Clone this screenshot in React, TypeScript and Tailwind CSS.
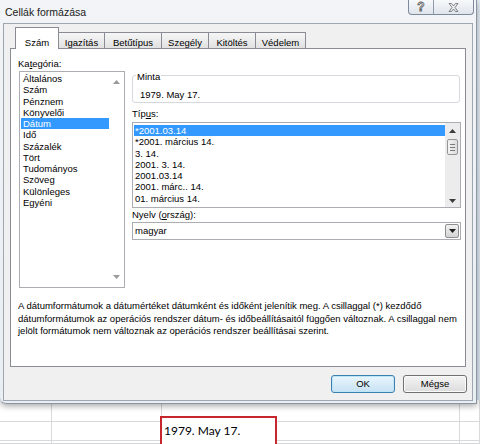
import React from "react";

const categories = [
  "Általános",
  "Szám",
  "Pénznem",
  "Könyvelői",
  "Dátum",
  "Idő",
  "Százalék",
  "Tört",
  "Tudományos",
  "Szöveg",
  "Különleges",
  "Egyéni",
];

const types = [
  "*2001.03.14",
  "*2001. március 14.",
  "3. 14.",
  "2001. 3. 14.",
  "2001.03.14",
  "2001. márc.. 14.",
  "01. március 14.",
];

const tabs = [
  { label: "Igazítás", w: "w-[47px]" },
  { label: "Betűtípus", w: "w-[58px]" },
  { label: "Szegély", w: "w-[48px]" },
  { label: "Kitöltés", w: "w-[48px]" },
  { label: "Védelem", w: "w-[51px]" },
];

function Tri({ up, color }: { up?: boolean; color: string }) {
  return (
    <svg width="7" height="4" viewBox="0 0 7 4">
      <path d={up ? "M0 4 L3.5 0 L7 4 Z" : "M0 0 L7 0 L3.5 4 Z"} fill={color} />
    </svg>
  );
}

function CategoryList() {
  return (
    <div className="ml-[1px] mt-[1px] flex h-[217px] w-[106px] border border-[#abadb3] bg-white">
      <div className="flex-1 pl-[1px] pt-[1px]">
        {categories.map((c) => (
          <div
            key={c}
            className={
              c === "Dátum"
                ? "h-[11.27px] bg-[#3399ff] px-[2px] leading-[11.27px] text-white"
                : "h-[11.27px] px-[2px] leading-[11.27px]"
            }
          >
            {c}
          </div>
        ))}
      </div>
      <div className="flex w-[15px] flex-col items-center justify-between py-[8px]">
        <Tri up color="#9a9a9a" />
        <Tri color="#9a9a9a" />
      </div>
    </div>
  );
}

function TypeList() {
  return (
    <div className="mt-[2px] flex h-[86px] w-[329px] border border-[#abadb3] bg-white">
      <div className="flex-1 pl-[1px] pt-[2px]">
        {types.map((t, i) => (
          <div
            key={t}
            className={
              i === 0
                ? "h-[11.3px] bg-[#3399ff] px-[1px] leading-[11.3px] text-white"
                : "h-[11.3px] px-[1px] leading-[11.3px]"
            }
          >
            {t}
          </div>
        ))}
      </div>
      <div className="flex w-[15px] flex-col items-center bg-[#ececec] pt-[6px] pb-[4px]">
        <Tri up color="#3c3c3c" />
        <div className="mt-[6px] flex h-[16px] w-[11px] flex-col items-center justify-center gap-[2px] rounded-[2px] border border-[#959595] bg-gradient-to-r from-[#f4f4f4] to-[#dcdcdc]">
          <div className="h-px w-[5px] bg-[#7a7a7a]" />
          <div className="h-px w-[5px] bg-[#7a7a7a]" />
          <div className="h-px w-[5px] bg-[#7a7a7a]" />
        </div>
        <div className="flex-1" />
        <Tri color="#3c3c3c" />
      </div>
    </div>
  );
}

export default function App() {
  return (
    <div className="relative h-[444px] w-[480px] overflow-hidden bg-gradient-to-b from-[#e4ecf4] to-[#d9e5f0] font-['Liberation_Sans',Arial,sans-serif] text-[9.5px] text-black">
      {/* dialog window */}
      <div className="relative z-10 flex h-[404px] w-[477px] flex-col rounded-bl-[6px] border-b border-r border-[#8a96a4] bg-gradient-to-b from-[#f2f4f7] to-[#e9eef3] px-[3px] shadow-[0_2px_6px_rgba(0,0,0,0.35)]">
        {/* title bar */}
        <div className="h-[23px] pl-[2px] pt-[6px] text-[10.5px] leading-[12px] text-[#1a1a1a]">
          Cellák formázása
        </div>
        <div className="absolute right-[2px] top-0 flex h-[15px] overflow-hidden rounded-b-[4px] border border-t-0 border-[#7d8a9b] bg-gradient-to-b from-[#f7f9fb] to-[#dfe5ec]">
          <div className="flex w-[25px] items-center justify-center border-r border-[#8f9baa] text-[12px] font-bold leading-none text-transparent [-webkit-text-stroke:0.8px_#5a5a5a]">
            ?
          </div>
          <div className="flex w-[39px] items-center justify-center">
            <svg width="11" height="9" viewBox="0 0 11 9">
              <path
                d="M1 0.5 H3.5 L5.5 3 L7.5 0.5 H10 L7 4.5 L10 8.5 H7.5 L5.5 6 L3.5 8.5 H1 L4 4.5 Z"
                fill="none"
                stroke="#6a6a6a"
                strokeWidth="0.8"
              />
            </svg>
          </div>
        </div>

        {/* client area */}
        <div className="flex h-[378px] flex-col border border-[#9ea6b0] bg-[#f0f0f0]">
          {/* tabs */}
          <div className="relative z-10 -mb-px flex h-[25px] items-end pl-[11px]">
            <div className="h-[22px] w-[44px] border border-b-0 border-[#898c95] bg-white pt-[9px] text-center leading-[12px]">
              Szám
            </div>
            {tabs.map((t) => (
              <div
                key={t.label}
                className={`${t.w} -ml-px mb-px h-[16px] border border-b-0 border-[#898c95] bg-gradient-to-b from-[#f6f6f6] to-[#e1e1e1] pt-[4px] text-center leading-[12px]`}
              >
                {t.label}
              </div>
            ))}
          </div>

          {/* tab page */}
          <div className="mx-[6px] flex h-[319px] flex-col border border-[#898c95] bg-white pl-[7px] pt-[9px]">
            <div className="flex">
              <div className="flex flex-col">
                <div className="leading-[12px]">
                  Ka<span className="underline">t</span>egória:
                </div>
                <CategoryList />
              </div>

              <div className="ml-[7px] flex flex-col pt-[17px]">
                <div className="relative h-[28px] w-[328px] rounded-[3px] border border-[#d5d9de]">
                  <div className="absolute -top-[5px] left-[3px] bg-white px-[1px] leading-[12px]">
                    Minta
                  </div>
                  <div className="pl-[7px] pt-[13px] leading-[12px]">1979. May 17.</div>
                </div>

                <div className="mt-[5px] leading-[12px]">
                  Típ<span className="underline">u</span>s:
                </div>
                <TypeList />

                <div className="mt-[1px] leading-[12px]">
                  Nyelv (<span className="underline">o</span>rszág):
                </div>
                <div className="mt-[1px] flex h-[18px] w-[329px] items-center border border-[#abadb3] bg-white">
                  <div className="flex-1 pl-[2px] leading-[12px]">magyar</div>
                  <div className="mr-px flex h-[14px] w-[14px] items-center justify-center rounded-[2px] border border-[#8e8f8f] bg-gradient-to-b from-[#f2f2f2] to-[#d3d3d3]">
                    <Tri color="#1e1e1e" />
                  </div>
                </div>
              </div>
            </div>

            <div className="mt-[12px] whitespace-nowrap leading-[12.5px]">
              <div>
                A dátumformátumok a dátumértéket dátumként és időként jelenítik meg. A csillaggal (*) kezdődő
              </div>
              <div>
                dátumformátumok az operációs rendszer dátum- és időbeállításaitól függően változnak. A csillaggal nem
              </div>
              <div>jelölt formátumok nem változnak az operációs rendszer beállításai szerint.</div>
            </div>
          </div>

          {/* buttons */}
          <div className="mt-[8px] flex justify-end gap-[8px] pr-[5px]">
            <button className="h-[18px] w-[64px] rounded-[3px] border border-[#3c7fb1] bg-gradient-to-b from-[#eaf6fd] to-[#c7e2f3] leading-[12px] shadow-[inset_0_0_0_1px_#bfe6f8]">
              OK
            </button>
            <button className="h-[18px] w-[64px] rounded-[3px] border border-[#707070] bg-gradient-to-b from-[#f4f4f4] to-[#dcdcdc] leading-[12px] shadow-[inset_0_0_0_1px_#fbfbfb]">
              Mégse
            </button>
          </div>
        </div>
      </div>

      {/* worksheet behind the dialog */}
      <div className="relative -mt-[4px] h-[44px] bg-white">
        <div className="grid h-full grid-cols-[52px_110px_298px_20px] grid-rows-[22px_19px_3px]">
          {Array.from({ length: 12 }, (_, i) => (
            <div key={i} className="border-b border-r border-[#d8d9db]" />
          ))}
        </div>
        <div className="absolute left-[160px] top-[16px] h-[32px] w-[117px] border-2 border-[#c8262d] bg-white pl-[2px] pt-[6px] font-['Lato',sans-serif] text-[12px] leading-[14px]">
          1979. May 17.
        </div>
      </div>
    </div>
  );
}
